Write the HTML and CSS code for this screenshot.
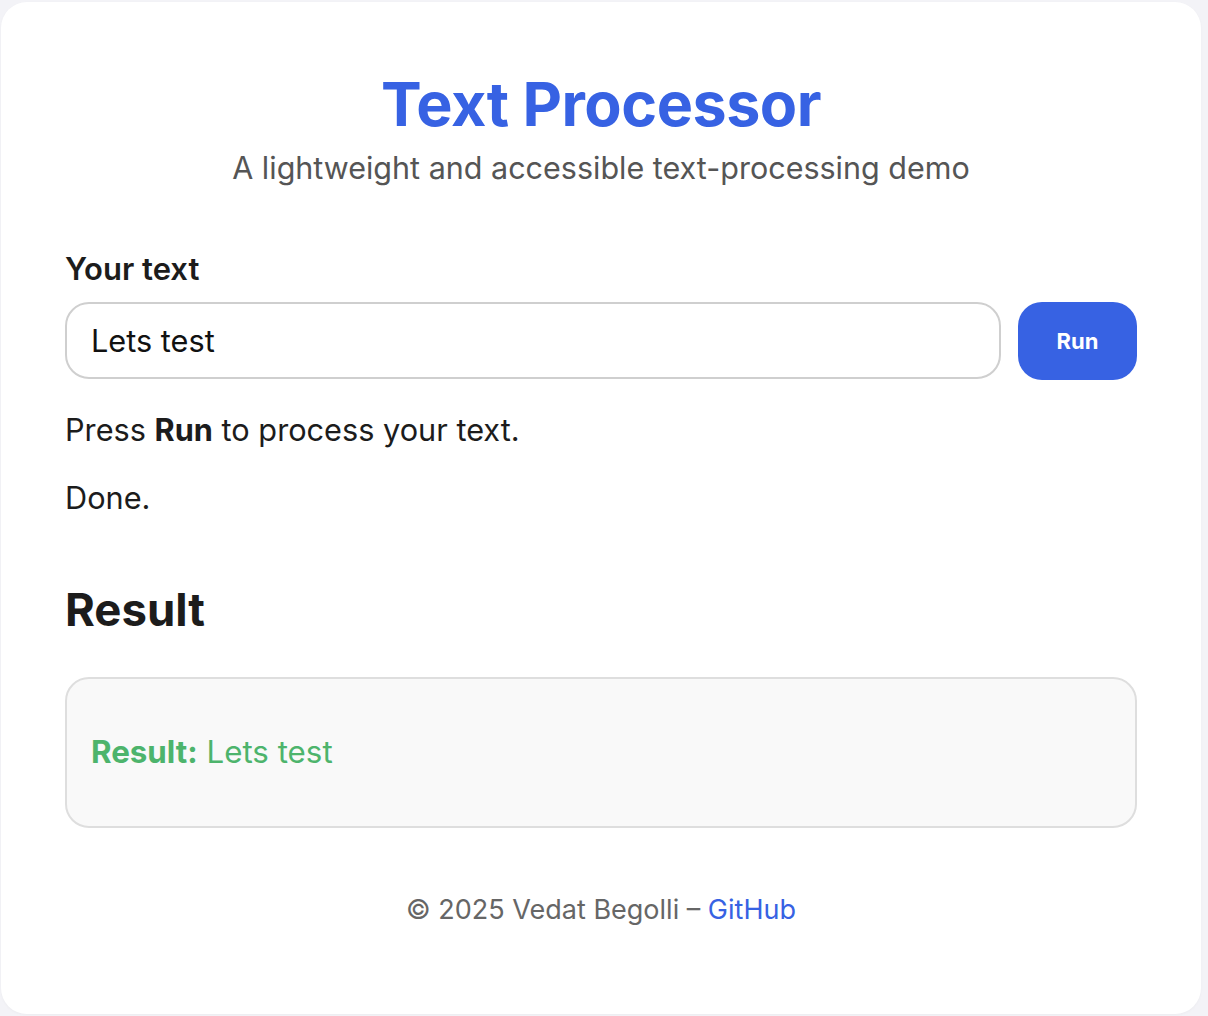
FILE: index.html
```html
<!DOCTYPE html>
<html lang="en">
<head>
<meta charset="utf-8">
<title>Text Processor</title>
<link rel="stylesheet" href="styles.css">
</head>
<body>
<main class="card">
  <header class="header">
    <h1 class="title">Text Processor</h1>
    <p class="subtitle">A lightweight and accessible text-processing demo</p>
  </header>
  <section class="form">
    <label class="label" for="txt">Your text</label>
    <div class="row">
      <input id="txt" class="input" type="text" value="Lets test">
      <button class="btn" type="button">Run</button>
    </div>
    <p class="hint">Press <strong>Run</strong> to process your text.</p>
    <p class="status">Done.</p>
  </section>
  <section class="result">
    <h2 class="result-title">Result</h2>
    <div class="result-box">
      <p class="result-text"><strong>Result:</strong> Lets test</p>
    </div>
  </section>
  <footer class="footer">© 2025 Vedat Begolli – <a class="link" href="#">GitHub</a></footer>
</main>
</body>
</html>
```

FILE: styles.css
```css
* { box-sizing: border-box; }
html, body { margin: 0; padding: 0; }
body {
  background: #f3f3f7;
  font-family: Inter, "Noto Sans", sans-serif;
  color: #1c1c1c;
  padding: 2px 7px 2px 1px;
}
.card {
  background: #fff;
  border-radius: 26px;
  min-height: 1012px;
  padding: 66px 64px 40px;
  box-shadow: 0 1px 3px rgba(0,0,0,0.03);
}
.header { text-align: center; }
.title {
  margin: 0;
  font-size: 61px;
  line-height: 1.2;
  font-weight: 700;
  color: #3762e3;
  letter-spacing: -0.5px;
}
.subtitle {
  margin: 9px 0 0;
  font-size: 30.5px;
  line-height: 1.2;
  color: #555;
}
.form { margin-top: 63px; }
.label {
  display: block;
  font-size: 31px;
  font-weight: 600;
  line-height: 1.2;
  margin-bottom: 15px;
}
.row { display: flex; gap: 17px; align-items: center; }
.input {
  flex: 1;
  height: 77px;
  border: 2px solid #cfcfcf;
  border-radius: 24px;
  padding: 0 24px;
  font-family: inherit;
  font-size: 30.7px;
  color: #111;
  background: #fff;
  outline: none;
}
.btn {
  width: 119px;
  height: 78px;
  border: none;
  border-radius: 24px;
  background: #3762e3;
  color: #fff;
  font-family: inherit;
  font-size: 22px;
  font-weight: 700;
}
.hint, .status {
  font-size: 30.7px;
  line-height: 1.2;
  margin: 0;
}
.hint { margin-top: 32px; }
.status { margin-top: 31px; }
.hint strong { font-weight: 700; }
.result { margin-top: 66px; }
.result-title {
  margin: 0;
  font-size: 45.5px;
  line-height: 1.2;
  font-weight: 700;
}
.result-box {
  margin-top: 40px;
  border: 2px solid #dedede;
  border-radius: 24px;
  background: #f9f9f9;
  padding: 55px 24px 54px;
}
.result-text {
  margin: 0;
  font-size: 31.3px;
  line-height: 1.2;
  color: #4db46c;
}
.result-text strong { font-weight: 700; }
.footer {
  margin-top: 66px;
  text-align: center;
  font-size: 27px;
  line-height: 1.2;
  color: #666;
}
.link { color: #3762e3; text-decoration: none; }
```
